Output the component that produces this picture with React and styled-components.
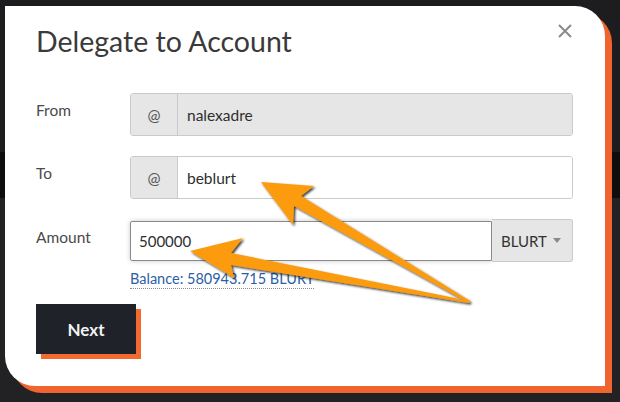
import styled, { createGlobalStyle } from 'styled-components'

const GlobalStyle = createGlobalStyle`
  html, body {
    margin: 0;
    padding: 0;
  }
  body {
    width: 620px;
    height: 402px;
    overflow: hidden;
    background: linear-gradient(to bottom, #1d1d1f 0 152px, #0d0d0e 152px 198px, #222224 198px);
    font-family: Lato, 'Liberation Sans', sans-serif;
  }
`

const Page = styled.div`
  position: relative;
  width: 620px;
  height: 402px;
  padding: 6px 0 0 5px;
  box-sizing: border-box;
`

const Modal = styled.div`
  position: relative;
  width: 600px;
  height: 380px;
  box-sizing: border-box;
  padding: 18px 32px 0 31px;
  background: #fff;
  border-radius: 0 30px 0 30px;
  box-shadow: 7px 7px 0 #f0652f;
`

const Title = styled.h1`
  margin: 0;
  font-size: 28.5px;
  font-weight: 400;
  line-height: 35px;
  color: #3a3a3a;
`

const Close = styled.button`
  position: absolute;
  top: 18px;
  right: 33px;
  width: 14px;
  height: 14px;
  padding: 0;
  border: 0;
  background: none;
  cursor: pointer;
`

const Form = styled.div`
  display: flex;
  flex-direction: column;
  gap: 20px;
  margin-top: 34px;
`

const Row = styled.div`
  display: grid;
  grid-template-columns: 94px 1fr;
  align-items: start;
`

const Label = styled.label`
  padding-top: ${({ $offset }) => $offset || 8}px;
  font-size: 15.5px;
  line-height: 19px;
  color: #4a4a4a;
`

const Group = styled.div`
  display: flex;
  height: 43px;
  box-sizing: border-box;
  border: 1px solid #cacaca;
  border-radius: 3px;
  overflow: hidden;
`

const Addon = styled.span`
  display: flex;
  align-items: center;
  justify-content: center;
  width: 46px;
  border-right: 1px solid #cacaca;
  background: #e6e6e6;
  font-size: 15.5px;
  color: #555;
`

const Field = styled.span`
  display: flex;
  align-items: center;
  flex: 1;
  padding-left: 9px;
  background: ${({ $disabled }) => ($disabled ? '#e6e6e6' : '#fff')};
  font-size: 15.5px;
  color: #2e2e2e;
`

const AmountCol = styled.div`
  display: flex;
  flex-direction: column;
`

const AmountLine = styled.div`
  display: flex;
  align-items: center;
  height: 43px;
`

const AmountInput = styled.span`
  display: flex;
  align-items: center;
  flex: 1;
  height: 40px;
  box-sizing: border-box;
  padding-left: 8px;
  border: 1px solid #8a8a8a;
  border-radius: 2px 0 0 2px;
  box-shadow: 0 0 5px #cacaca;
  font-size: 15px;
  color: #2e2e2e;
`

const Select = styled.span`
  display: flex;
  align-items: center;
  justify-content: space-between;
  width: 81px;
  height: 43px;
  box-sizing: border-box;
  padding: 0 11px 0 9px;
  border: 1px solid #cacaca;
  border-left: 0;
  border-radius: 0 3px 3px 0;
  background: #e6e6e6;
  font-size: 15px;
  color: #333;

  &::after {
    content: '';
    border-left: 4px solid transparent;
    border-right: 4px solid transparent;
    border-top: 5px solid #8a8a8a;
  }
`

const Balance = styled.a`
  align-self: flex-start;
  margin-top: 8px;
  font-size: 14.5px;
  line-height: 18px;
  color: #2b5ea8;
  text-decoration: none;
  border-bottom: 1px dotted #8a8a8a;
  cursor: pointer;
`

const Next = styled.button`
  width: 100px;
  height: 50px;
  margin-top: 15px;
  border: 0;
  background: #1f2229;
  box-shadow: 5px 5px 0 #f26a2f;
  font-family: inherit;
  font-size: 17px;
  font-weight: 700;
  color: #f2f2f2;
  cursor: pointer;
`

const Overlay = styled.svg`
  position: absolute;
  top: 0;
  left: 0;
  pointer-events: none;
`

const App = () => (
  <>
    <GlobalStyle />
    <Page>
      <Modal>
        <Title>Delegate to Account</Title>
        <Close aria-label="Close">
          <svg width="14" height="14" viewBox="0 0 14 14">
            <path d="M1 1 L13 13 M13 1 L1 13" stroke="#8a8a8a" strokeWidth="2" />
          </svg>
        </Close>
        <Form>
          <Row>
            <Label>From</Label>
            <Group>
              <Addon>@</Addon>
              <Field $disabled>nalexadre</Field>
            </Group>
          </Row>
          <Row>
            <Label>To</Label>
            <Group>
              <Addon>@</Addon>
              <Field>beblurt</Field>
            </Group>
          </Row>
          <Row>
            <Label $offset={9}>Amount</Label>
            <AmountCol>
              <AmountLine>
                <AmountInput>500000</AmountInput>
                <Select>BLURT</Select>
              </AmountLine>
              <Balance>Balance: 580943.715 BLURT</Balance>
            </AmountCol>
          </Row>
        </Form>
        <Next>Next</Next>
      </Modal>
      <Overlay width="620" height="402" viewBox="0 0 620 402">
        <defs>
          <filter id="arrowShadow" x="-10%" y="-10%" width="130%" height="130%">
            <feDropShadow dx="1.5" dy="1.5" stdDeviation="1" floodColor="#000" floodOpacity="0.8" />
          </filter>
        </defs>
        <g fill="#fb9b0b" filter="url(#arrowShadow)">
          <polygon points="261,182 314,186 301,196 470,301 469,303 294,206 293,225" />
          <polygon points="190,251 243,238 231,253 470,301 469,303 231,265 234,278" />
        </g>
      </Overlay>
    </Page>
  </>
)

export default App
